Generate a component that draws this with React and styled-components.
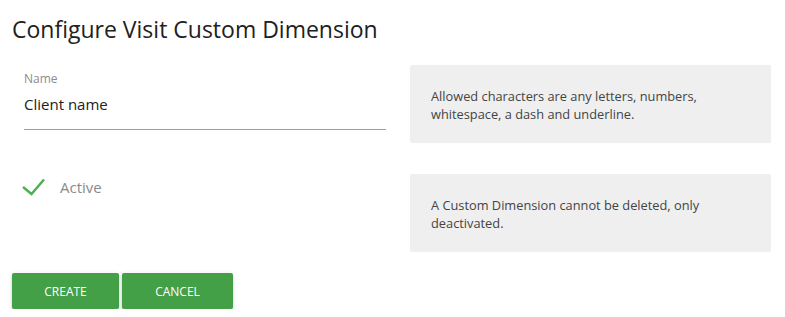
import React from 'react';
import styled, { createGlobalStyle } from 'styled-components';

const GlobalStyle = createGlobalStyle`
  body {
    margin: 0;
    background: #fff;
    font-family: "Open Sans", "Noto Sans", Arial, sans-serif;
    color: #212121;
  }
`

const Page = styled.div`
  padding: 11px 14px 0 12px;
`
const Title = styled.h2`
  margin: 0 0 18px 0;
  font-size: 23px;
  font-weight: 400;
  line-height: 36px;
  color: #212121;
`
const FormGrid = styled.div`
  display: grid;
  grid-template-columns: 386px 1fr;
  column-gap: 12px;
  row-gap: 31px;
  align-items: start;
`
const FieldCell = styled.div`
  padding: ${props => props.top || 0}px 12px 0 12px;
`
const Label = styled.label`
  display: block;
  font-size: 12px;
  line-height: 16px;
  color: #8c8c8c;
`
const TextInput = styled.div`
  margin-top: 5px;
  font-size: 15px;
  line-height: 24px;
  color: #212121;
  padding-bottom: 13px;
  border-bottom: 1px solid #9e9e9e;
`
const HelpBox = styled.div`
  background: #efefef;
  border-radius: 2px;
  height: 78px;
  box-sizing: border-box;
  padding: 22px 21px 0 21px;
  font-size: 12.8px;
  line-height: 18px;
  color: #444;
`
const CheckRow = styled.div`
  display: flex;
  align-items: center;
  gap: 14px;
  padding: ${props => props.top || 0}px 0 0 10px;
`
const CheckLabel = styled.span`
  font-size: 15px;
  line-height: 20px;
  color: #8a8a8a;
`
const Buttons = styled.div`
  display: flex;
  gap: 3px;
  margin-top: 21px;
`
const Button = styled.button`
  width: ${props => props.w}px;
  height: 36px;
  border: none;
  border-radius: 2px;
  background: #43a047;
  color: #fff;
  font-family: "Open Sans", "Noto Sans", Arial, sans-serif;
  font-size: 12px;
  text-transform: uppercase;
  box-shadow: 0 2px 2px 0 rgba(0,0,0,0.14), 0 1px 5px 0 rgba(0,0,0,0.12), 0 3px 1px -2px rgba(0,0,0,0.2);
  cursor: pointer;
`

function CheckIcon(){
  return (
    <svg width="24" height="18" viewBox="0 0 24 18">
      <polyline points="1,9 9.5,16 22,1.5" fill="none" stroke="#4caf50" strokeWidth="2.4" />
    </svg>
  )
}

export default function App(){
  return (
    <Page>
      <GlobalStyle />
      <Title>Configure Visit Custom Dimension</Title>
      <FormGrid>
        <FieldCell top={6}>
          <Label>Name</Label>
          <TextInput>Client name</TextInput>
        </FieldCell>
        <HelpBox>Allowed characters are any letters, numbers, whitespace, a dash and underline.</HelpBox>
        <CheckRow top={3}>
          <CheckIcon />
          <CheckLabel>Active</CheckLabel>
        </CheckRow>
        <HelpBox>A Custom Dimension cannot be deleted, only deactivated.</HelpBox>
      </FormGrid>
      <Buttons>
        <Button w={107}>Create</Button>
        <Button w={111}>Cancel</Button>
      </Buttons>
    </Page>
  )
}
